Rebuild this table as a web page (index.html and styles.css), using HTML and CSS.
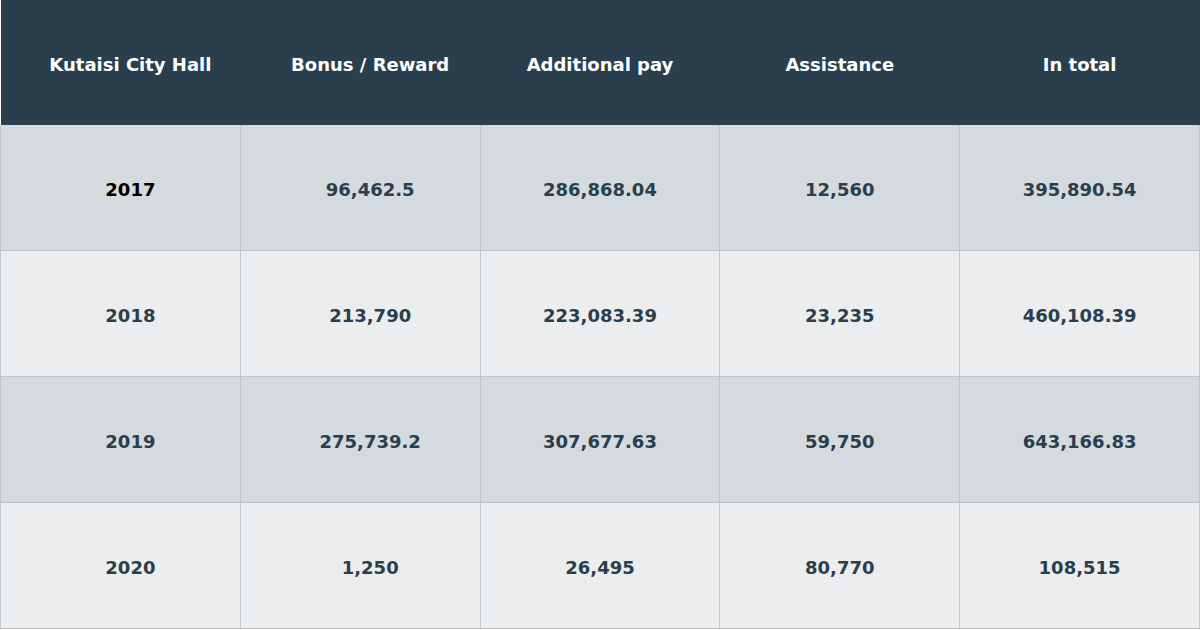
FILE: index.html
```html
<!DOCTYPE html>
<html>
<head>
<meta charset="utf-8">
<link rel="stylesheet" href="styles.css">
</head>
<body>
<table class="data">
  <thead>
    <tr>
      <th class="shift">Kutaisi City Hall</th>
      <th class="shift">Bonus / Reward</th>
      <th>Additional pay</th>
      <th>Assistance</th>
      <th>In total</th>
    </tr>
  </thead>
  <tbody>
    <tr class="odd">
      <td class="shift first">2017</td>
      <td class="shift">96,462.5</td>
      <td>286,868.04</td>
      <td>12,560</td>
      <td>395,890.54</td>
    </tr>
    <tr class="even">
      <td class="shift">2018</td>
      <td class="shift">213,790</td>
      <td>223,083.39</td>
      <td>23,235</td>
      <td>460,108.39</td>
    </tr>
    <tr class="odd">
      <td class="shift">2019</td>
      <td class="shift">275,739.2</td>
      <td>307,677.63</td>
      <td>59,750</td>
      <td>643,166.83</td>
    </tr>
    <tr class="even">
      <td class="shift">2020</td>
      <td class="shift">1,250</td>
      <td>26,495</td>
      <td>80,770</td>
      <td>108,515</td>
    </tr>
  </tbody>
</table>
</body>
</html>
```

FILE: styles.css
```css
html, body {
  margin: 0;
  padding: 0;
  background: #ffffff;
}
.data {
  width: 1200px;
  border-collapse: collapse;
  table-layout: fixed;
  font-family: "DejaVu Sans", sans-serif;
  font-weight: bold;
  font-size: 18px;
  color: #2a3e4c;
}
.data th {
  background: #2a3f4d;
  color: #ffffff;
  height: 121px;
  padding: 4px 0 0 0;
  text-align: center;
  vertical-align: middle;
  border: none;
}
.data td {
  height: 121px;
  padding: 4px 0 0 0;
  text-align: center;
  vertical-align: middle;
  border: 1px solid #bfc5c9;
  border-top: none;
}
.data .shift {
  padding-left: 20px;
}
.data tr.odd td {
  background: #d4dadd;
}
.data tr.even td {
  background: #ebedef;
}
.data td.first {
  color: #000000;
}
```
